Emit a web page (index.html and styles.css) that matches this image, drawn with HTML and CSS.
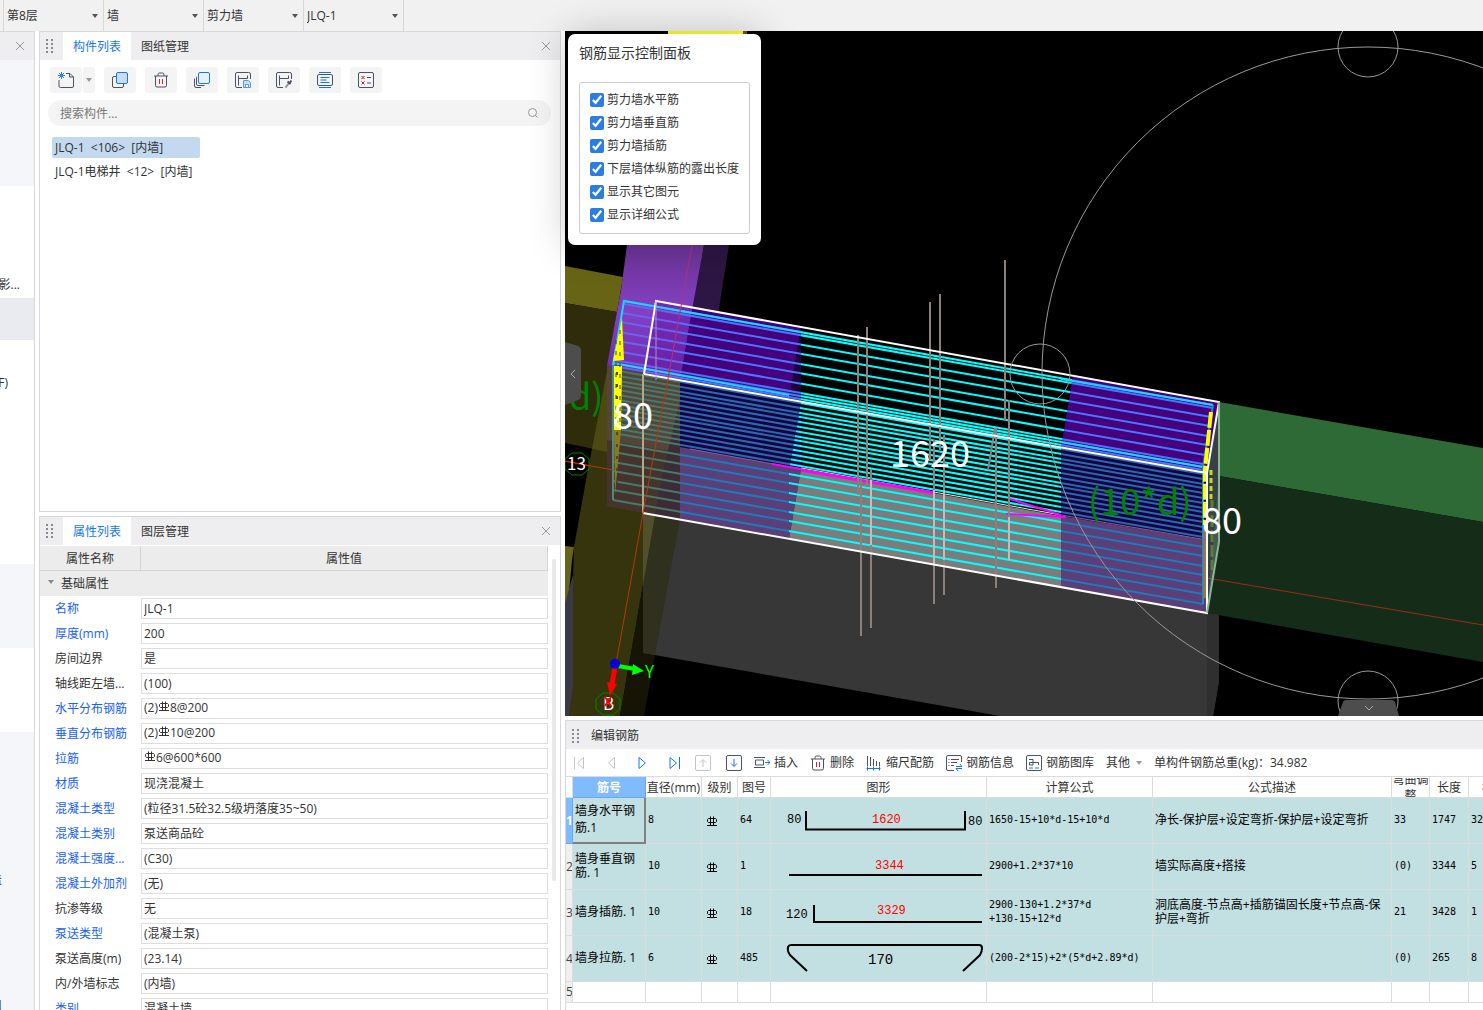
FILE: index.html
```html
<!DOCTYPE html>
<html lang="zh-CN">
<head>
  <meta charset="UTF-8">
  <title>编辑钢筋</title>
  <link rel="stylesheet" href="styles.css">
</head>
<body>
  <svg class="sprite" width="0" height="0">
    <symbol id="caret" viewBox="0 0 6 4"><path d="M0 0h6L3 4z" fill="currentColor"/></symbol>
    <symbol id="close" viewBox="0 0 10 10"><path d="M1 1l8 8M9 1l-8 8" stroke="#999" fill="none"/></symbol>
    <symbol id="grip" viewBox="0 0 7 14"><path d="M1 0v14M6 0v14" stroke="#8a8a8c" stroke-width="2" stroke-dasharray="2 2"/></symbol>
    <!-- HRB400 steel grade sign -->
    <symbol id="rebar" viewBox="0 0 10 10"><path d="M3.5 .5v9M6.5 .5v9M0 9.5h10M1.5 2.5h7l1 1v2l-1 1h-7l-1-1v-2z" fill="none" stroke="currentColor"/></symbol>
    <symbol id="trash" viewBox="0 0 16 16"><path d="M1 4h14M5 4V2.5Q5 1 6.5 1h3Q11 1 11 2.500V4M2.500 4v9.500q0 1.500 1.500 1.500h8q1.500 0 1.500-1.500V4" fill="none" stroke="#4a5266"/><path d="M6.500 7v5M9.500 7v5" stroke="#d9232e"/></symbol>
  </svg>

  <header class="topbar">
    <label class="picker"><select aria-label="楼层"><option>第8层</option></select><svg class="caret"><use href="#caret"/></svg></label>
    <label class="picker"><select aria-label="构件类别"><option>墙</option></select><svg class="caret"><use href="#caret"/></svg></label>
    <label class="picker"><select aria-label="构件类型"><option>剪力墙</option></select><svg class="caret"><use href="#caret"/></svg></label>
    <label class="picker"><select aria-label="构件"><option>JLQ-1</option></select><svg class="caret"><use href="#caret"/></svg></label>
  </header>

  <main class="workspace">
    <aside class="nav-strip">
      <div class="strip-head"><button class="close" aria-label="关闭"><svg><use href="#close"/></svg></button></div>
      <div class="strip-block tinted h126"></div>
      <div class="strip-block h112"><span class="strip-near">影...</span></div>
      <div class="strip-block selected"></div>
      <div class="strip-block h224"><span class="strip-mid">F)</span></div>
      <div class="strip-block tinted h84"></div>
      <div class="strip-block h84"></div>
      <div class="strip-block tinted rest"><span class="strip-far">盖</span><span class="strip-far">口</span></div>
    </aside>

    <div class="side">
      <section class="panel component-panel">
        <div class="panel-head">
          <svg class="grip"><use href="#grip"/></svg>
          <button class="tab active">构件列表</button>
          <button class="tab">图纸管理</button>
          <button class="close" aria-label="关闭"><svg><use href="#close"/></svg></button>
        </div>
        <div class="tools">
          <div class="split">
            <button class="tool" aria-label="新建"><svg viewBox="0 0 16 16"><path d="M8 1.500h4L15.500 5v9q0 1.500-1.500 1.500H2.500Q1 15.500 1 14V8M11.500 1.500V5h4" fill="none" stroke="#4a5266"/><path d="M1 1l5 5M6 1L1 6M3.500 0v7M0 3.500h7" stroke="#2a7de1"/></svg></button>
            <button class="tool narrow" aria-label="更多"><svg class="caret"><use href="#caret"/></svg></button>
          </div>
          <button class="tool" aria-label="复制"><svg viewBox="0 0 16 16"><rect x=".5" y="4.500" width="11" height="11" rx="1.500" fill="none" stroke="#4a5266"/><rect x="4.500" y=".5" width="11" height="11" rx="1.500" fill="#c9dcf6" stroke="#1677e6"/></svg></button>
          <button class="tool" aria-label="删除"><svg><use href="#trash"/></svg></button>
          <button class="tool" aria-label="层间复制"><svg viewBox="0 0 16 16"><path d="M3 4.500q-.5 0-.5 1V12q0 1.500 1.500 1.500h6.500M.5 6.500V14q0 1.500 1.500 1.500h5" fill="none" stroke="#4a5266"/><rect x="4.500" y=".5" width="11" height="11" rx="1.500" fill="#e8f2ff" stroke="#1677e6"/></svg></button>
          <button class="tool" aria-label="存档"><svg viewBox="0 0 16 16"><path d="M7 15.500H2Q.5 15.500.5 14V2Q.5.5 2 .5h11.500Q15.500.5 15.500 2v5M3.500 13.500V3.500M3.500 6.500h9M12.500 3.500v3" fill="none" stroke="#4a5266"/><path d="M8.500 8.500h5l2 2v5h-7z" fill="#c9dcf6" stroke="#5a98e6"/><path d="M10.500 15v-2.500h3V15" fill="#fff" stroke="#5a98e6"/></svg></button>
          <button class="tool" aria-label="提取"><svg viewBox="0 0 16 16"><path d="M7 15.500H2Q.5 15.500.5 14V2Q.5.5 2 .5h11.500Q15.500.5 15.500 2v5M3.500 13.500V3.500M3.500 6.500h9M12.500 3.500v3" fill="none" stroke="#4a5266"/><path d="M9.500 15.500l4-5" stroke="#8c93a3" stroke-width="2"/><path d="M11.500 9.500l3 2.500M13.500 11l2-2.500" stroke="#4a5266" stroke-width="2"/></svg></button>
          <button class="tool" aria-label="排序"><svg viewBox="0 0 16 16"><rect x=".5" y="2.500" width="15" height="11" rx="1.500" fill="none" stroke="#4a5266"/><path d="M2 .5h12M2 15.500h12M3.500 5.500h9M3.500 8h6M3.500 10.500h9" stroke="#1677e6"/></svg></button>
          <button class="tool" aria-label="检查"><svg viewBox="0 0 16 16"><rect x=".5" y=".5" width="15" height="15" rx="1.500" fill="none" stroke="#4a5266"/><path d="M3.500 4l3 3M6.500 4l-3 3M3.500 9.500l3 3M6.500 9.500l-3 3" stroke="#d9232e"/><path d="M9 5.500h4M9 11h4" stroke="#4a5266"/></svg></button>
        </div>
        <div class="search">
          <input type="text" placeholder="搜索构件..." aria-label="搜索构件">
          <svg viewBox="0 0 10 10"><circle cx="4.500" cy="4.500" r="4" fill="none" stroke="#999"/><path d="M7 7l2.500 2.500" stroke="#999"/></svg>
        </div>
        <ul class="component-list">
          <li class="current">JLQ-1&nbsp; &lt;106&gt;&nbsp; [内墙]</li>
          <li>JLQ-1电梯井&nbsp; &lt;12&gt;&nbsp; [内墙]</li>
        </ul>
      </section>

      <section class="panel property-panel">
        <div class="panel-head">
          <svg class="grip"><use href="#grip"/></svg>
          <button class="tab active">属性列表</button>
          <button class="tab">图层管理</button>
          <button class="close" aria-label="关闭"><svg><use href="#close"/></svg></button>
        </div>
        <div class="property-body">
          <table class="props">
            <colgroup><col class="c-name"><col></colgroup>
            <thead><tr><th>属性名称</th><th>属性值</th></tr></thead>
            <tbody>
              <tr class="group"><td colspan="2"><svg class="caret"><use href="#caret"/></svg>基础属性</td></tr>
              <tr><td><label class="key" for="p1">名称</label></td><td><input id="p1" value="JLQ-1"></td></tr>
              <tr><td><label class="key" for="p2">厚度(mm)</label></td><td><input id="p2" value="200"></td></tr>
              <tr><td><label for="p3">房间边界</label></td><td><input id="p3" value="是"></td></tr>
              <tr><td><label for="p4">轴线距左墙...</label></td><td><input id="p4" value="(100)"></td></tr>
              <tr><td><span class="key" id="k5">水平分布钢筋</span></td><td><div class="rich" role="textbox" contenteditable="true" aria-labelledby="k5">(2)<svg class="rebar"><use href="#rebar"/></svg>8@200</div></td></tr>
              <tr><td><span class="key" id="k6">垂直分布钢筋</span></td><td><div class="rich" role="textbox" contenteditable="true" aria-labelledby="k6">(2)<svg class="rebar"><use href="#rebar"/></svg>10@200</div></td></tr>
              <tr><td><span class="key" id="k7">拉筋</span></td><td><div class="rich" role="textbox" contenteditable="true" aria-labelledby="k7"><svg class="rebar"><use href="#rebar"/></svg>6@600*600</div></td></tr>
              <tr><td><label class="key" for="p8">材质</label></td><td><input id="p8" value="现浇混凝土"></td></tr>
              <tr><td><label class="key" for="p9">混凝土类型</label></td><td><input id="p9" value="(粒径31.5砼32.5级坍落度35~50)"></td></tr>
              <tr><td><label class="key" for="p10">混凝土类别</label></td><td><input id="p10" value="泵送商品砼"></td></tr>
              <tr><td><label class="key" for="p11">混凝土强度...</label></td><td><input id="p11" value="(C30)"></td></tr>
              <tr><td><label class="key" for="p12">混凝土外加剂</label></td><td><input id="p12" value="(无)"></td></tr>
              <tr><td><label for="p13">抗渗等级</label></td><td><input id="p13" value="无"></td></tr>
              <tr><td><label class="key" for="p14">泵送类型</label></td><td><input id="p14" value="(混凝土泵)"></td></tr>
              <tr><td><label for="p15">泵送高度(m)</label></td><td><input id="p15" value="(23.14)"></td></tr>
              <tr><td><label for="p16">内/外墙标志</label></td><td><input id="p16" value="(内墙)"></td></tr>
              <tr><td><label class="key" for="p17">类别</label></td><td><input id="p17" value="混凝土墙"></td></tr>
            </tbody>
          </table>
          <div class="scrollbar"></div>
        </div>
      </section>
    </div>

    <div class="stage">
      <div class="viewport">
        <svg class="scene" viewBox="565 31 918 685" preserveAspectRatio="xMidYMid slice">
          <defs>
            <linearGradient id="columnFill" x1="0" y1="0" x2="0" y2="1"><stop offset="0" stop-color="#6b3494"/><stop offset=".5" stop-color="#8440c4"/><stop offset="1" stop-color="#6a28a8"/></linearGradient>
            <!-- top mesh, front face mesh, bottom mesh -->
            <g id="barsTop" fill="none" stroke-width="2">
              <path d="M624 301L1213 405M624 304L1213 408M622 313L1211 417M621 322L1210 426M619 332L1208 436M618 341L1207 445M616 351L1205 455M614 360L1203 464M613 363L1203 467M613 366L1203 470"/>
            </g>
            <g id="barsMid" fill="none" stroke-width="2">
              <path d="M613 370L1203 474M613 375L1203 479M613 380L1203 484M613 384L1203 488M613 389L1203 493M613 394L1203 498M613 399L1203 503M613 404L1203 508M613 408L1203 512M613 413L1203 517M613 418L1203 522M613 423L1203 527M613 428L1203 532M613 433L1203 537"/>
            </g>
            <g id="barsLow" fill="none" stroke-width="2">
              <path d="M613 443L1203 547M613 452L1203 556M613 462L1203 566M613 471L1203 575M613 481L1203 585M613 490L1203 594M613 500L1203 604"/>
            </g>
            <clipPath id="zoneA"><path d="M600 290H680V620H600z"/></clipPath>
            <clipPath id="zoneB"><path d="M680 290H808L801 330V402L789 470V620H680z"/></clipPath>
            <clipPath id="zoneC"><path d="M801 290H1090L1073 375 1061 449V620H789V470L801 402z"/></clipPath>
            <clipPath id="zoneD"><path d="M1090 290H1230V620H1061V449L1073 375z"/></clipPath>
          </defs>
          <rect x="565" y="31" width="918" height="685" fill="#000"/>
          <path d="M668 31h75v3h-75z" fill="#ffff30"/><path d="M743 31h4v3h-4z" fill="#5c5c12"/>

          <!-- neighbouring beams -->
          <path d="M565 266L623 277 617 312 565 303z" fill="#686415"/>
          <path d="M565 303L617 312 608 366 594 449 565 443z" fill="#2f2c0b"/>
          <path d="M608 366L680 380 661 480 643 585 620 716H569L574 547 586 480z" fill="#36340c"/>
          <path d="M608 366L625 369V455L592 449z" fill="#4c4a12"/>
          <path d="M565 546L574 547 572 560 568 603H565z" fill="#66631a"/>
          <path d="M573 575V684L569 716H565V603z" fill="#3a3a46"/>
          <path d="M661 480L680 513 655 655 644 716H620L643 585z" fill="#151405"/>
          <path d="M627 245H704L684 381 607 366 621 290z" fill="url(#columnFill)"/>
          <path d="M704 245H729L718 315 692 310z" fill="#2d1643"/>

          <path d="M643 513L1207 613 1219 542V681L1213 716H1000L643 653z" fill="#373737"/>
          <path d="M1207 613L1219 542V681L1213 716H1207z" fill="#2f2f2f"/>
          <path d="M643 513L680 519 655 655 643 653z" fill="#2f301e"/>
          <path d="M643 513L655 515 643 585z" fill="#52502a"/>

          <path d="M1219 402L1483 448V522L1219 476z" fill="#2e6a35"/>
          <path d="M1219 476L1483 522V662L1207 613z" fill="#152d18"/>
          <path d="M1207 578L1483 625" stroke="#9a2c18"/>

          <!-- wall body -->
          <path d="M692 308L801 327 789 400 680 380z" fill="#45007e"/>
          <path d="M656 302L692 308 680 380 644 374z" fill="#6a1ca4" fill-opacity=".6"/>
          <path d="M680 380L801 401V469L680 447z" fill="#1e003c"/>
          <path d="M801 327V401L789 400z" fill="#1e003c"/>
          <path d="M680 447L801 469 789 539 680 519z" fill="#5c3e78"/>
          <path d="M607 366L680 380V519L607 506z" fill="#54443a"/>
          <path d="M607 440L680 453V519L607 506z" fill="#46342c"/>
          <path d="M661 480L680 400V519L655 515z" fill="#3c2c38"/>
          <path d="M801 469L1061 516V587L789 539z" fill="#7c7c7c"/>
          <path d="M1073 375L1219 402 1207 473 1061 448z" fill="#45007e"/>
          <path d="M1061 448L1207 473V539L1061 516z" fill="#1e003c"/>
          <path d="M1061 516L1207 540V613L1061 587z" fill="#5c3e78"/>
          <path d="M1207 473L1219 402V542L1207 613z" fill="#8aa0a8" fill-opacity=".4"/>

          <!-- horizontal bars, recoloured by zone -->
          <g clip-path="url(#zoneA)"><use href="#barsTop" stroke="#6a62f0"/><use href="#barsMid" stroke="#467a6c"/><use href="#barsLow" stroke="#467a6c"/></g>
          <g clip-path="url(#zoneB)"><use href="#barsTop" stroke="#4678ff"/><use href="#barsMid" stroke="#1e6cb4"/><use href="#barsLow" stroke="#1e7ab8"/></g>
          <g clip-path="url(#zoneC)"><use href="#barsTop" stroke="#0ff"/><use href="#barsMid" stroke="#0ff"/><use href="#barsLow" stroke="#0ff"/></g>
          <g clip-path="url(#zoneD)"><use href="#barsTop" stroke="#4678ff"/><use href="#barsMid" stroke="#1e6cb4"/><use href="#barsLow" stroke="#1e7ab8"/></g>
          <path d="M613 365L624 301 801 332M613 363L789 395M1061 379L1213 405M1061 442L1203 467" fill="none" stroke="#18d8f8" stroke-width="2"/>
          <path d="M613 365V500" stroke="#4a8c80" stroke-width="2"/>
          <path d="M1213 405L1203 467V604" fill="none" stroke="#1e8cc0" stroke-width="2"/>

          <!-- hooks at both ends -->
          <path d="M622 318L624 360 613 361z" fill="#ff0"/>
          <path d="M614 366h8l-1 64h-7z" fill="#ff0"/>
          <path d="M614 430h7l-6 65z" fill="#8a7a1c"/>
          <path d="M616 340V428M620 330V428" stroke="#4c3a2a" stroke-dasharray="4 7"/>
          <path d="M617 372V490" stroke="#54443a" stroke-width="2" stroke-dasharray="3 9"/>
          <path d="M1211 412L1205 470V525" fill="none" stroke="#ff0" stroke-width="4" stroke-dasharray="16 2"/>
          <path d="M1211 470V500" stroke="#c8d820" stroke-width="3" stroke-dasharray="5 3"/>
          <path d="M1205 530V598" stroke="#a8743a" stroke-width="3"/>
          <path d="M1212 500V570" stroke="#5c7c3a" stroke-width="3" stroke-dasharray="12 3"/>

          <path d="M690 449L801 469M1061 515L1207 540" stroke="#8a5c9c"/>
          <path d="M801 468L1061 515" stroke="#e8e8e8"/>
          <path d="M772 464L801 469" stroke="#f0f" stroke-width="2"/>
          <path d="M801 470L935 493" stroke="#f0f" stroke-width="3"/>
          <path d="M1010 499L1061 515M1006 514L1066 517" stroke="#f0f" stroke-width="2"/>

          <!-- vertical bars -->
          <path d="M858 335V495M867 327V487M861 477V636M871 469V628M930 302V460M940 294V450M934 440V604M944 435V595M1005 260V421M1009 400V560M996 428V588M995 428L988 470" stroke="#8c807a" stroke-width="2"/>
          <path d="M871 480V545M934 490V565M944 490V560M1009 517V560" stroke="#c4bcb8" stroke-width="2"/>

          <path d="M656 301L1219 402 1207 473 644 374zM643 513L1207 613V473" fill="none" stroke="#fff" stroke-width="2"/>
          <path d="M643 374V513" stroke="#b4a888" stroke-width="2"/>
          <path d="M656 301V380" stroke="#b08cd0"/>
          <path d="M1219 402V542L1207 613" fill="none" stroke="#8cb498" stroke-width="2"/>
          <path d="M692 245L670 368" stroke="#b03084"/>
          <path d="M670 368L643 513 616 664M565 461L613 470" fill="none" stroke="#b03a10"/>

          <!-- orbit control -->
          <g fill="none" stroke="#999">
            <circle cx="1368" cy="373" r="326"/><circle cx="1368" cy="47" r="30"/><circle cx="1040" cy="374" r="30"/><circle cx="1368" cy="701" r="30"/>
          </g>

          <!-- dimensions -->
          <g class="dim">
            <text x="613" y="429">80</text><text x="890" y="467">1620</text><text x="1202" y="534">80</text>
            <g fill="#008200"><text x="569" y="410">d)</text><text x="1088" y="515">(10*d)</text></g>
          </g>

          <!-- axis bubbles and tripod -->
          <path d="M572 453h10l7 6v10l-7 6h-10l-7-6v-10zM603 693h10l7 6v10l-7 6h-10l-7-6v-10z" fill="none" stroke="#008200"/>
          <path d="M565 461L590 466" stroke="#f00"/>
          <text class="axis" x="567" y="470" fill="#fff">13</text>
          <text class="axis" x="603" y="710" fill="#fff">B</text>
          <path d="M605 697l6 9M611 697l-6 9" stroke="#f00" stroke-width="2"/>
          <path d="M618 666L635 669" stroke="#0f0" stroke-width="4"/><path d="M633 664L644 671 632 675z" fill="#0f0"/>
          <path d="M615 667L612 684" stroke="#f00" stroke-width="5"/><path d="M607 682L617 684 610 696z" fill="#f00"/>
          <circle cx="615" cy="664" r="5" fill="#0000d8"/>
          <text class="axis" x="645" y="678" fill="#0f0">Y</text>

          <path d="M565 342L578 346Q581 347 581 351V395Q581 399 578 400L565 405z" fill="#4d4d4d"/><path d="M575 370l-4 4 4 4" fill="none" stroke="#aaa"/>
          <path d="M1338 716L1343 702Q1344 700 1346 700H1392Q1394 700 1395 702L1399 716z" fill="#4d4d4d"/><path d="M1365 706l4 4 4-4" fill="none" stroke="#aaa"/>
        </svg>

        <div class="display-panel">
          <h2>钢筋显示控制面板</h2>
          <div class="options">
            <label><input type="checkbox" checked>剪力墙水平筋</label>
            <label><input type="checkbox" checked>剪力墙垂直筋</label>
            <label><input type="checkbox" checked>剪力墙插筋</label>
            <label><input type="checkbox" checked>下层墙体纵筋的露出长度</label>
            <label><input type="checkbox" checked>显示其它图元</label>
            <label><input type="checkbox" checked>显示详细公式</label>
          </div>
        </div>
      </div>

      <section class="editor">
        <div class="editor-head"><svg class="grip"><use href="#grip"/></svg>编辑钢筋</div>
        <div class="editor-tools">
          <div class="steps">
            <button aria-label="首行" disabled><svg viewBox="0 0 16 16"><path d="M3.500 2v12M12.500 2.500v11L6.500 8z" fill="none" stroke="#c4c4c8"/></svg></button>
            <button aria-label="上一行" disabled><svg viewBox="0 0 16 16"><path d="M12.500 2.500v11L6.500 8z" fill="none" stroke="#c4c4c8"/></svg></button>
            <button aria-label="下一行"><svg viewBox="0 0 16 16"><path d="M6 2.500v11L12.500 8z" fill="none" stroke="#1677e6"/></svg></button>
            <button aria-label="末行"><svg viewBox="0 0 16 16"><path d="M15.500 2v12M6 2.500v11L12.500 8z" fill="none" stroke="#1677e6"/></svg></button>
            <button aria-label="上移" disabled><svg viewBox="0 0 16 16"><path d="M2 .5h12q1.500 0 1.500 1.500v12q0 1.500-1.500 1.500H2Q.5 15.500.5 14V2Q.5.5 2 .5zM8 12V5M5 7.500L8 4.500l3 3" fill="none" stroke="#c4c4c8"/></svg></button>
            <button aria-label="下移"><svg viewBox="0 0 16 16"><rect x=".5" y=".5" width="15" height="15" rx="1.500" fill="none" stroke="#4a5266"/><path d="M8 4v7M5 8.500l3 3 3-3" fill="none" stroke="#1677e6"/></svg></button>
          </div>
          <button><svg viewBox="0 0 16 16"><path d="M0 2.500h11M0 12.500h11M1.500 5h8v5h-8z" fill="none" stroke="#4a5266"/><path d="M11 7.500h5M13.500 5l2.500 2.500-2.500 2.500" fill="none" stroke="#1677e6"/></svg>插入</button>
          <button><svg><use href="#trash"/></svg>删除</button>
          <button><svg viewBox="0 0 16 16"><path d="M1.500 1v10M4.500 2v9M7.500 4v7M10.500 6v5M13.500 7v4" stroke="#4a5266"/><path d="M.5 13.500h14M1.500 11.500v4M7.500 11.500v4M13.500 11.500v4" stroke="#1677e6"/></svg>缩尺配筋</button>
          <button><svg viewBox="0 0 16 16"><path d="M8 15.500H2Q.5 15.500.5 14V2Q.5.5 2 .5h12q1.500 0 1.500 1.500v5M5 4.500h8M5 7.500h6M5 10.500h3M2.500 4.500h1M2.500 7.500h1M2.500 10.500h1" fill="none" stroke="#4a5266"/><path d="M10 11.500h6l-2-2.500M16 13.500h-6l2 2.500" fill="none" stroke="#1677e6"/></svg>钢筋信息</button>
          <button><svg viewBox="0 0 16 16"><rect x=".5" y=".5" width="15" height="15" rx="1.500" fill="none" stroke="#4a5266"/><path d="M3 4.500h4v5.500H3.500V7.500H12.500V10" fill="none" stroke="#4a5266"/><path d="M3 13h4M9 13h4" stroke="#1677e6"/></svg>钢筋图库</button>
          <button>其他<svg class="caret"><use href="#caret"/></svg></button>
          <span class="total">单构件钢筋总重(kg)：34.982</span>
        </div>
        <div class="grid-wrap">
          <table class="rebar-grid">
            <colgroup><col class="g-no"><col class="g-name"><col class="g-dia"><col class="g-grade"><col class="g-fig"><col class="g-shape"><col class="g-formula"><col><col class="g-bend"><col class="g-len"><col class="g-count"></colgroup>
            <thead>
              <tr><th></th><th class="picked">筋号</th><th>直径(mm)</th><th>级别</th><th>图号</th><th>图形</th><th>计算公式</th><th>公式描述</th><th><div class="wrap-head">弯曲调整</div></th><th>长度</th><th>根数</th></tr>
            </thead>
            <tbody>
              <tr>
                <th class="picked">1</th><td class="focus">墙身水平钢筋.1</td><td class="num">8</td><td class="grade"><svg><use href="#rebar"/></svg></td><td class="num">64</td>
                <td class="shape"><svg viewBox="0 0 215 45"><path d="M35 13v18.500h159V13"/><text x="16" y="25">80</text><text class="main" x="101" y="25">1620</text><text x="197" y="27">80</text></svg></td>
                <td class="num">1650-15+10*d-15+10*d</td><td>净长-保护层+设定弯折-保护层+设定弯折</td><td class="num">33</td><td class="num">1747</td><td class="num">32</td>
              </tr>
              <tr>
                <th>2</th><td>墙身垂直钢筋. 1</td><td class="num">10</td><td class="grade"><svg><use href="#rebar"/></svg></td><td class="num">1</td>
                <td class="shape"><svg viewBox="0 0 215 45"><path d="M18 31h193"/><text class="main" x="104" y="25">3344</text></svg></td>
                <td class="num">2900+1.2*37*10</td><td>墙实际高度+搭接</td><td class="num">(0)</td><td class="num">3344</td><td class="num">5</td>
              </tr>
              <tr>
                <th>3</th><td>墙身插筋. 1</td><td class="num">10</td><td class="grade"><svg><use href="#rebar"/></svg></td><td class="num">18</td>
                <td class="shape"><svg viewBox="0 0 215 45"><path d="M43 15v17h168"/><text x="15" y="28">120</text><text class="main" x="106" y="24">3329</text></svg></td>
                <td class="num">2900-130+1.2*37*d<br>+130-15+12*d</td><td>洞底高度-节点高+插筋锚固长度+节点高-保护层+弯折</td><td class="num">21</td><td class="num">3428</td><td class="num">1</td>
              </tr>
              <tr>
                <th>4</th><td>墙身拉筋. 1</td><td class="num">6</td><td class="grade"><svg><use href="#rebar"/></svg></td><td class="num">485</td>
                <td class="shape"><svg viewBox="0 0 215 45"><path d="M36 35L19 19q-3-4-2-8 1-2 3-2h188q3 0 3 3 0 4-2 7l-17 16"/><text class="large" x="97" y="28">170</text></svg></td>
                <td class="num">(200-2*15)+2*(5*d+2.89*d)</td><td></td><td class="num">(0)</td><td class="num">265</td><td class="num">8</td>
              </tr>
              <tr class="blank"><th>5</th><td></td><td></td><td></td><td></td><td></td><td></td><td></td><td></td><td></td><td></td></tr>
            </tbody>
          </table>
        </div>
      </section>
    </div>
  </main>
</body>
</html>
```
FILE: styles.css
```css
* {
  box-sizing: border-box;
}

body {
  margin: 0;
  height: 100vh;
  display: flex;
  flex-direction: column;
  overflow: hidden;
  background: #fff;
  color: #333;
  font: 12px/16px "Open Sans", "Noto Sans CJK SC", sans-serif;
}

button, input, select {
  font: inherit;
  color: inherit;
}

button {
  border: none;
  padding: 0;
  background: none;
  cursor: pointer;
}

.sprite {
  position: absolute;
}

.caret {
  width: 6px;
  height: 4px;
  color: #555;
  flex: none;
}

.grip {
  width: 7px;
  height: 14px;
  flex: none;
}

/* top bar */
.topbar {
  flex: none;
  height: 31px;
  display: flex;
  padding-left: 3px;
  background: #f1f1f1;
}

.picker {
  width: 100px;
  display: flex;
  align-items: center;
  padding-right: 5px;
  border-left: 1px solid #d8d8d8;
}

.picker:last-child {
  width: 101px;
  border-right: 1px solid #d8d8d8;
}

.picker select {
  flex: 1;
  min-width: 0;
  appearance: none;
  border: none;
  outline: none;
  background: none;
  padding: 0 3px;
}

.workspace {
  flex: 1;
  min-height: 0;
  display: flex;
  gap: 4px;
}

/* clipped module tree on the far left */
.nav-strip {
  width: 35px;
  flex: none;
  display: flex;
  flex-direction: column;
  overflow: hidden;
  border-top: 1px solid #d8d8d8;
  border-right: 1px solid #d8d8d8;
}

.strip-head {
  height: 28px;
  flex: none;
  display: flex;
  align-items: center;
  background: #eeeef0;
}

.close {
  margin-left: auto;
  padding: 0 9px;
  display: flex;
}

.close svg {
  width: 10px;
  height: 10px;
}

.strip-block {
  flex: none;
  display: flex;
  flex-direction: column;
  align-items: flex-end;
  overflow: hidden;
  white-space: nowrap;
}

.tinted { background: #f5f6f9; }
.selected { height: 42px; background: #eaebf0; }
.h84 { height: 84px; }
.h112 { height: 112px; justify-content: flex-end; }
.h126 { height: 126px; }
.h224 { height: 224px; }

.strip-block.rest {
  flex: 1;
  padding-top: 140px;
  gap: 110px;
}

.strip-near { padding: 0 14px 5px 0; }
.strip-mid { padding: 35px 26px 0 0; }
.strip-far { padding-right: 32px; }

/* left panels */
.side {
  width: 522px;
  flex: none;
  display: flex;
  flex-direction: column;
  gap: 4px;
}

.panel {
  border: 1px solid #d8d8d8;
  background: #fff;
}

.component-panel {
  flex: 480;
  min-height: 0;
}

.property-panel {
  flex: 495;
  min-height: 0;
  display: flex;
  flex-direction: column;
  border-bottom: none;
}

.panel-head {
  height: 28px;
  flex: none;
  display: flex;
  align-items: center;
  background: #eeeef0;
}

.panel-head .grip {
  margin: 0 10px 0 6px;
}

.tab {
  height: 28px;
  padding: 2px 10px 0;
}

.tab.active {
  background: #fff;
  color: #1677f0;
}

.tools {
  display: flex;
  gap: 9px;
  padding: 7px 10px;
}

.split {
  display: flex;
  gap: 1px;
}

.tool {
  width: 32px;
  height: 26px;
  display: flex;
  align-items: center;
  justify-content: center;
  background: #f4f4f5;
  border-radius: 3px;
}

.tool svg {
  width: 16px;
  height: 16px;
}

.tool.narrow {
  width: 12px;
}

.tool .caret {
  width: 6px;
  height: 4px;
  color: #999;
}

.search {
  height: 26px;
  margin: 0 9px 0 8px;
  padding: 0 13px 0 12px;
  display: flex;
  align-items: center;
  background: #f4f4f4;
  border-radius: 13px;
}

.search input {
  flex: 1;
  border: none;
  outline: none;
  background: none;
  padding: 2px 0 0;
}

.search input::placeholder {
  color: #777;
}

.search svg {
  width: 10px;
  height: 10px;
}

.component-list {
  list-style: none;
  margin: 0;
  padding: 11px 12px;
  display: flex;
  flex-direction: column;
  align-items: flex-start;
  gap: 3px;
}

.component-list li {
  min-width: 148px;
  height: 21px;
  line-height: 21px;
  padding: 0 3px;
  border-radius: 2px;
}

.component-list .current {
  background: #c2d9f0;
}

/* properties */
.property-body {
  flex: 1;
  min-height: 0;
  overflow: hidden;
  display: flex;
  align-items: flex-start;
  padding-top: 1px;
}

.props {
  flex: 1;
  table-layout: fixed;
  border-collapse: separate;
  border-spacing: 0;
}

.c-name { width: 101px; }

.props th {
  height: 25px;
  padding: 2px 0 0;
  font-weight: normal;
  background: #ececec;
  border-right: 1px solid #d4d4d4;
  border-bottom: 1px solid #d4d4d4;
}

.props td {
  height: 25px;
  padding: 0;
  white-space: nowrap;
}

.props td:first-child {
  padding: 1px 0 0 15px;
}

.props .group td {
  padding: 1px 0 0 8px;
  background: #ececec;
}

.group .caret {
  margin-right: 7px;
  vertical-align: 4px;
  color: #888;
}

.props .key {
  color: #1660ff;
}

.props input, .rich {
  display: block;
  width: 100%;
  height: 21px;
  padding: 0 2px;
  border: 1px solid #dedede;
  background: #fff;
  outline: none;
}

.rich {
  line-height: 18px;
}

.rebar {
  width: 10px;
  height: 10px;
  margin: 0 1px;
  vertical-align: 1px;
}

.scrollbar {
  width: 4px;
  height: 322px;
  margin: 13px 4px 0;
  border-radius: 2px;
  background: #e8e8e8;
}

/* 3D view */
.stage {
  flex: 1;
  min-width: 0;
  display: flex;
  flex-direction: column;
  gap: 4px;
}

.viewport {
  flex: 1;
  min-height: 0;
  position: relative;
}

.scene {
  display: block;
  width: 100%;
  height: 100%;
}

.dim {
  fill: #fff;
  font: 36px "Noto Sans CJK SC", sans-serif;
}

.axis {
  font: 17px "Noto Sans CJK SC", sans-serif;
}

.display-panel {
  position: absolute;
  top: 3px;
  left: 3px;
  width: 193px;
  padding: 10px 11px 11px;
  background: #fff;
  border-radius: 7px;
  box-shadow: 0 0 40px rgba(0, 0, 0, 0.22);
}

.display-panel h2 {
  margin: 0 0 20px;
  font-size: 14px;
  font-weight: normal;
  line-height: 18px;
}

.options {
  display: flex;
  flex-direction: column;
  padding: 5px 10px 7px;
  border: 1px solid #ccc;
  border-radius: 3px;
}

.options label {
  height: 23px;
  display: flex;
  align-items: center;
  gap: 3px;
  white-space: nowrap;
}

.options input {
  width: 14px;
  height: 14px;
  margin: 0;
  flex: none;
  accent-color: #2a7de1;
}

/* rebar editor */
.editor {
  height: 290px;
  flex: none;
  border-top: 1px solid #d8d8d8;
  border-left: 1px solid #d8d8d8;
}

.editor-head {
  height: 28px;
  display: flex;
  align-items: center;
  gap: 12px;
  padding: 2px 0 0 6px;
  background: #eeeef0;
}

.editor-tools {
  height: 27px;
  display: flex;
  align-items: center;
  gap: 12px;
  padding: 1px 0 0 5px;
  white-space: nowrap;
}

.steps {
  display: flex;
  gap: 15px;
}

.editor-tools button {
  display: flex;
  align-items: center;
  gap: 4px;
}

.editor-tools button svg {
  width: 16px;
  height: 16px;
}

.editor-tools button .caret {
  width: 6px;
  height: 4px;
  margin-left: 2px;
  color: #999;
}

.grid-wrap {
  overflow: hidden;
}

.rebar-grid {
  width: 100%;
  min-width: 954px;
  table-layout: fixed;
  border-collapse: separate;
  border-spacing: 0;
  border-top: 1px solid #dcdcdc;
  color: #000;
}

.g-no { width: 7px; }
.g-name { width: 73px; }
.g-dia { width: 56px; }
.g-grade { width: 36px; }
.g-fig { width: 33px; }
.g-shape { width: 216px; }
.g-formula { width: 166px; }
.g-bend { width: 38px; }
.g-len { width: 39px; }
.g-count { width: 51px; }

.rebar-grid th, .rebar-grid td {
  padding: 0;
  border-right: 1px solid #dcdcdc;
  border-bottom: 1px solid #dcdcdc;
}

.rebar-grid thead th {
  height: 21px;
  padding-top: 1px;
  font-weight: normal;
  color: #333;
  white-space: nowrap;
}

.rebar-grid tbody th {
  font-weight: normal;
  background: #f0f0f0;
  color: #444;
  overflow: hidden;
}

.rebar-grid th.picked {
  font-weight: bold;
  color: #fff;
  background: #80baff;
  border-color: #68a8f4;
}

.wrap-head {
  height: 19px;
  display: flex;
  align-items: center;
  overflow: hidden;
  white-space: normal;
}

.rebar-grid tbody td {
  height: 46px;
  padding: 0 2px 2px;
  line-height: 14px;
  background: #c2dfe1;
}

.rebar-grid td.focus {
  line-height: 17px;
  border-right: 2px solid #808080;
  border-bottom: 2px solid #808080;
}

.rebar-grid .num {
  font-family: "DejaVu Sans Mono", monospace;
  font-size: 10px;
  white-space: nowrap;
}

.rebar-grid td.grade {
  padding: 0 5px;
}

.grade svg {
  display: block;
  width: 10px;
  height: 10px;
}

.rebar-grid td.shape {
  padding: 0;
}

.shape svg {
  display: block;
  width: 100%;
  height: 45px;
}

.shape path {
  fill: none;
  stroke: #000;
  stroke-width: 2;
}

.shape text {
  font: 12px "Liberation Mono", monospace;
}

.shape .main {
  fill: #f00;
}

.shape .large {
  font-size: 14px;
}

.rebar-grid .blank td {
  height: 21px;
  background: #fff;
}
```
